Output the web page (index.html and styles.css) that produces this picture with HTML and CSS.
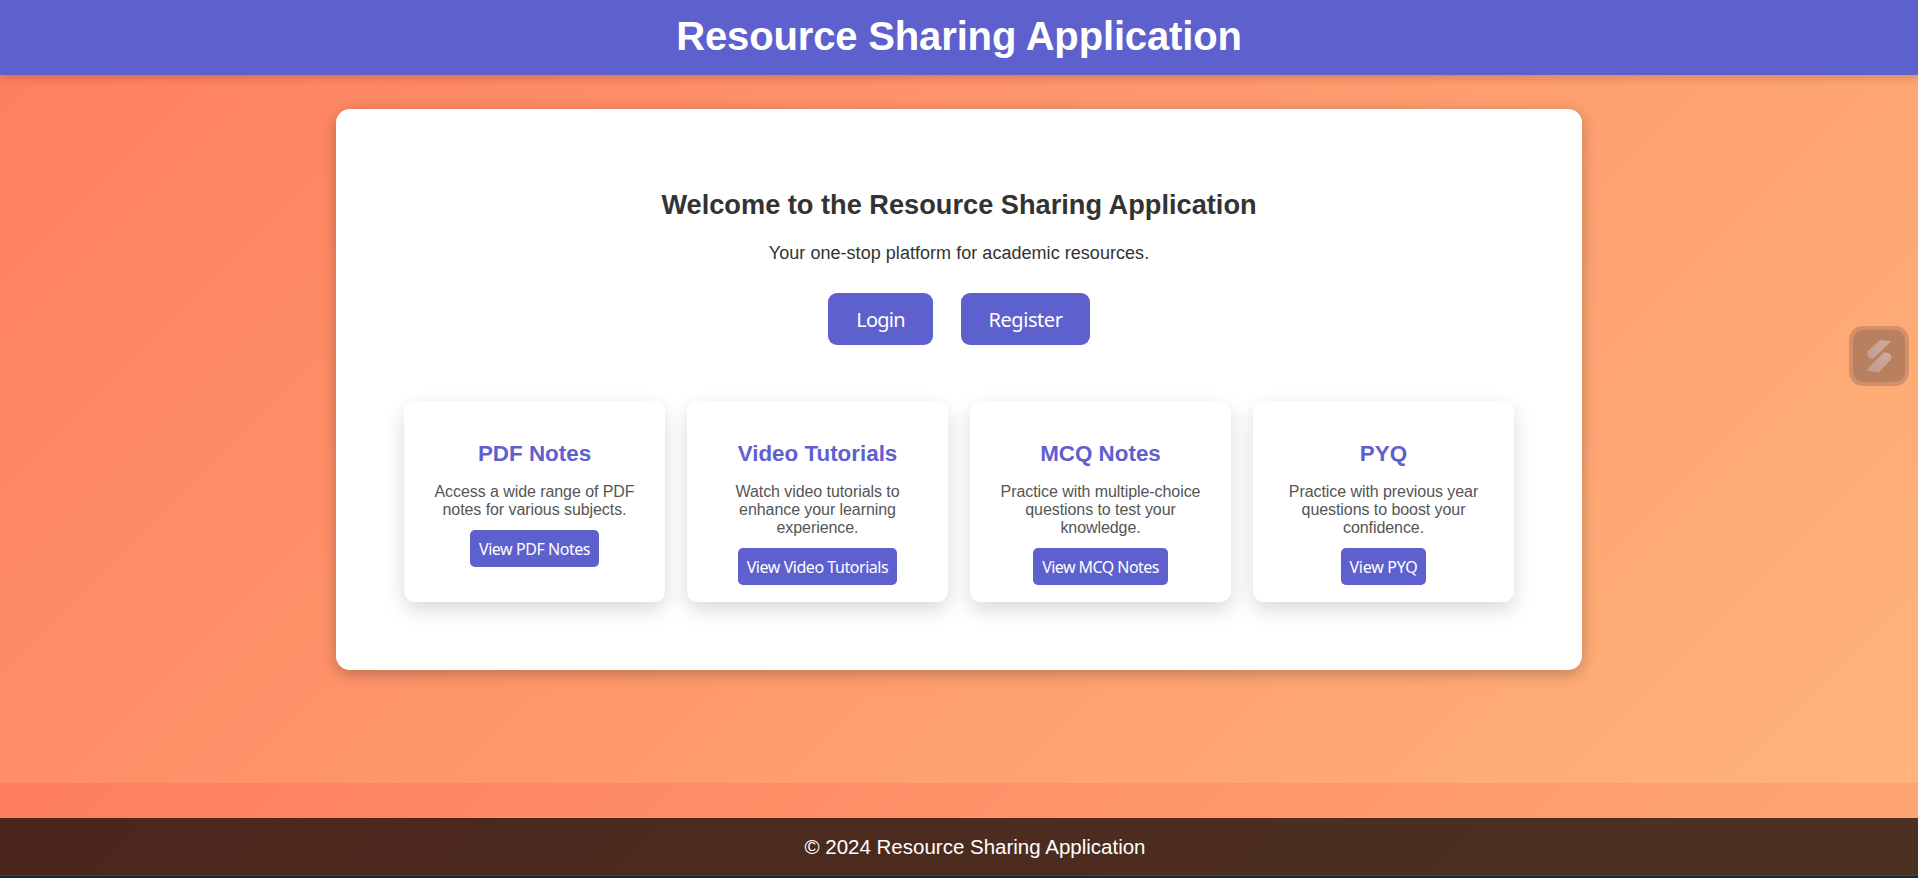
FILE: index.html
```html
<!DOCTYPE html>
<html lang="en">
<head>
<meta charset="utf-8">
<title>Resource Sharing Application</title>
<link rel="stylesheet" href="styles.css">
</head>
<body>
<header class="header"><h1 class="header-title">Resource Sharing Application</h1></header>
<main class="main">
  <section class="panel">
    <h2 class="welcome">Welcome to the Resource Sharing Application</h2>
    <p class="tagline">Your one-stop platform for academic resources.</p>
    <div class="actions">
      <a class="btn login">Login</a>
      <a class="btn register">Register</a>
    </div>
    <div class="cards">
      <article class="card"><h3 class="card-title">PDF Notes</h3><p class="card-text">Access a wide range of PDF<br>notes for various subjects.</p><a class="view view-pdf">View PDF Notes</a></article>
      <article class="card"><h3 class="card-title">Video Tutorials</h3><p class="card-text">Watch video tutorials to<br>enhance your learning<br>experience.</p><a class="view view-video">View Video Tutorials</a></article>
      <article class="card"><h3 class="card-title">MCQ Notes</h3><p class="card-text">Practice with multiple-choice<br>questions to test your<br>knowledge.</p><a class="view view-mcq">View MCQ Notes</a></article>
      <article class="card"><h3 class="card-title">PYQ</h3><p class="card-text">Practice with previous year<br>questions to boost your<br>confidence.</p><a class="view view-pyq">View PYQ</a></article>
    </div>
  </section>
</main>
<footer class="footer">© 2024 Resource Sharing Application</footer>
<div class="edge"></div>
<div class="widget">
  <svg class="widget-icon" width="26" height="34" viewBox="0 0 26 34">
    <defs><linearGradient id="g" x1="1" y1="0" x2="0" y2="1"><stop offset="0" stop-color="#d3aa98"/><stop offset="1" stop-color="#bf9c94"/></linearGradient></defs>
    <path fill="url(#g)" d="M14 1 25 2.200 8.500 18.800Q7 20.200 5 19.500 1 18 1 14.500 1 13 2.500 11.500Z"/>
    <path fill="url(#g)" d="M12.500 33.500 .5 31.200 15.500 15.500Q17 13.500 19 13.500 25.500 14 25.500 18 25.500 20 24 21.500Z"/>
  </svg>
</div>
</body>
</html>
```

FILE: styles.css
```css
* { box-sizing: border-box; }
html { height: 100%; background: linear-gradient(135deg, #ff7e5f, #feb47b) 0 0 / 100% 783px repeat-y; }
body {
  margin: 0;
  height: 878px;
  overflow: hidden;
  display: flex;
  flex-direction: column;
  font-family: "Liberation Sans", Arial, sans-serif;
  color: #333;
  text-align: center;
}
.header {
  height: 75px;
  flex: none;
  display: flex;
  justify-content: center;
  background: #5e60ce;
  box-shadow: 0 4px 8px rgba(0, 0, 0, .15);
}
.header-title { margin: 0; font-size: 40px; line-height: 73px; letter-spacing: -.15px; color: #fff; }
.main { flex: 1; padding-top: 34px; }
.panel {
  width: 1246px;
  height: 561px;
  margin: 0 auto;
  padding: 79px 68px 0;
  background: #fff;
  border-radius: 14px;
  box-shadow: 0 4px 15px rgba(0, 0, 0, .25);
}
.welcome { margin: 0; font-size: 27.2px; line-height: 34px; }
.tagline { margin: 20px 0 0; font-size: 18px; line-height: 22px; letter-spacing: .04px; }
.actions { display: flex; justify-content: center; gap: 28px; margin-top: 29px; }
.btn {
  height: 52px;
  border-radius: 9px;
  background: #5e60ce;
  color: #fff;
  font: 20px/54px "Noto Sans", sans-serif;
}
.login { width: 105px; letter-spacing: -.8px; }
.register { width: 129px; letter-spacing: -.45px; }
.cards { display: grid; grid-template-columns: repeat(4, 261px); gap: 22px; margin-top: 56px; }
.card {
  height: 201px;
  padding-top: 39px;
  background: #fff;
  border-radius: 11px;
  box-shadow: 0 8px 20px rgba(0, 0, 0, .15);
}
.card-title { margin: 0; font-size: 22.4px; line-height: 28px; color: #5e60ce; }
.card-text { margin: 15px 0 11px; font-size: 16px; line-height: 18px; letter-spacing: -.07px; color: #555; }
.view {
  display: block;
  height: 37px;
  margin: 0 auto;
  border-radius: 5px;
  background: #5e60ce;
  color: #fff;
  font: 16px/38px "Noto Sans", sans-serif;
  letter-spacing: -.45px;
  white-space: nowrap;
}
.view-pdf { width: 129px; }
.view-video { width: 159px; }
.view-mcq { width: 135px; letter-spacing: -.55px; }
.view-pyq { width: 85px; letter-spacing: -.25px; }
.footer {
  height: 57px;
  flex: none;
  padding-left: 32px;
  background: rgba(0, 0, 0, .7);
  color: #fff;
  font-size: 20.5px;
  line-height: 58px;
}
.edge { height: 3px; flex: none; background: #132839; border-top: 1px solid #384549; }
.widget {
  position: absolute;
  left: 1849px;
  top: 326px;
  width: 60px;
  height: 60px;
  display: flex;
  align-items: center;
  justify-content: center;
  border: 4px solid #d3906a;
  border-radius: 14px;
  background: #b98060;
}
```
